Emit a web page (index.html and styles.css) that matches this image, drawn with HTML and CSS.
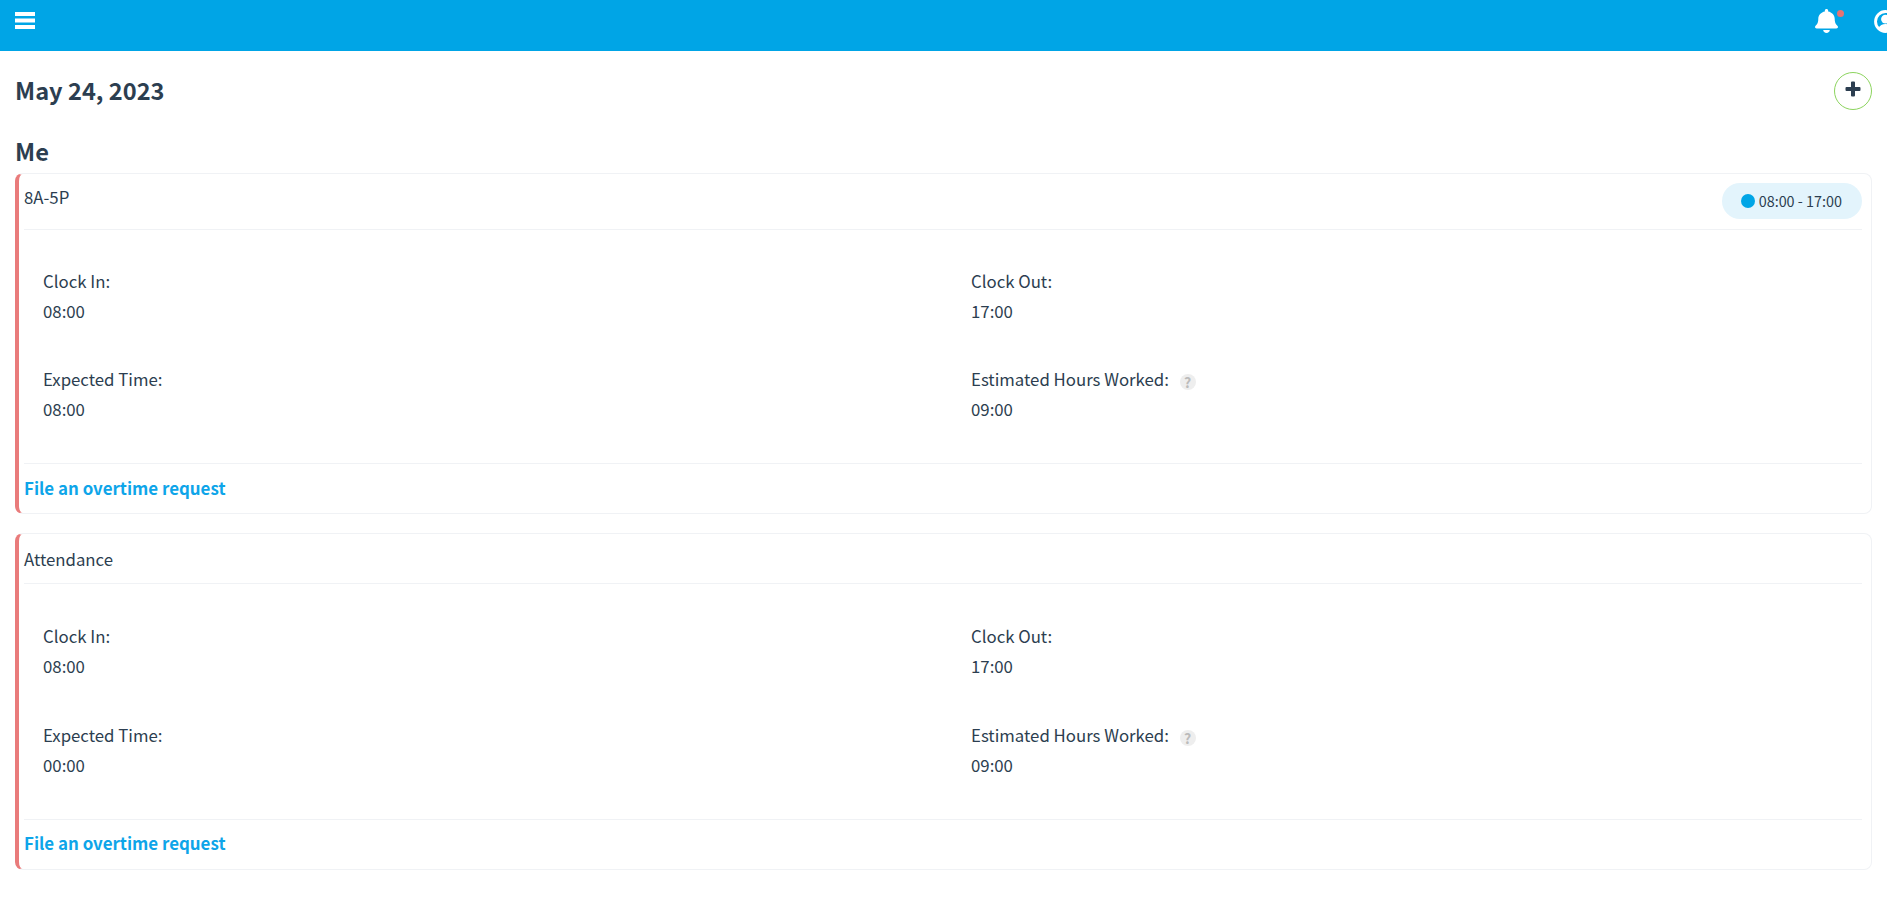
FILE: index.html
```html
<!DOCTYPE html>
<html lang="en">
<head>
    <meta charset="UTF-8">
    <meta name="viewport" content="width=device-width, initial-scale=1.0">
    <title>Attendance</title>
    <link rel="stylesheet" href="styles.css">
</head>
<body>
    <header class="topbar">
        <svg class="menu-icon" viewBox="0 0 20 17" aria-hidden="true">
            <rect width="20" height="4" y="0"></rect>
            <rect width="20" height="4" y="6.5"></rect>
            <rect width="20" height="4" y="13"></rect>
        </svg>
        <div class="topbar-right">
            <div class="bell">
                <svg class="bell-icon" viewBox="0 0 448 512" preserveAspectRatio="none" aria-hidden="true">
                    <path d="M224 512c35.32 0 63.97-28.65 63.97-64H160.03c0 35.35 28.65 64 63.97 64zm215.39-149.71c-19.32-20.76-55.47-51.99-55.47-154.29 0-77.7-54.48-139.9-127.94-155.16V32c0-17.67-14.32-32-31.98-32s-31.98 14.33-31.98 32v20.84C118.56 68.1 64.08 130.3 64.08 208c0 102.3-36.15 133.53-55.47 154.29-6 6.45-8.66 14.16-8.61 21.71.11 16.4 12.98 32 32.1 32h383.8c19.12 0 32-15.6 32.1-32 .05-7.55-2.61-15.27-8.61-21.71z"></path>
                </svg>
                <span class="bell-dot"></span>
            </div>
            <div class="user">
                <svg class="user-icon" viewBox="0 0 24 24" aria-hidden="true">
                    <circle class="user-ring" cx="12" cy="12" r="10.4"></circle>
                    <circle cx="12" cy="9.5" r="4.6"></circle>
                    <path d="M4.500 19.500c1.500-3.500 4.200-4.800 7.500-4.800s6 1.300 7.500 4.800l-2.500 2H7z"></path>
                </svg>
            </div>
        </div>
    </header>

    <main class="content">
        <div class="date-row">
            <h1>May 24, 2023</h1>
            <button class="add-btn" aria-label="Add">
                <svg viewBox="0 0 16 16" aria-hidden="true">
                    <path d="M6 1.5a1 1 0 0 1 1-1h2a1 1 0 0 1 1 1V6h4.500a1 1 0 0 1 1 1v2a1 1 0 0 1-1 1H10v4.500a1 1 0 0 1-1 1H7a1 1 0 0 1-1-1V10H1.500a1 1 0 0 1-1-1V7a1 1 0 0 1 1-1H6z"></path>
                </svg>
            </button>
        </div>
        <h2>Me</h2>

        <section class="card">
            <div class="card-head">
                <span>8A-5P</span>
                <span class="pill"><i class="pill-dot"></i>08:00 - 17:00</span>
            </div>
            <div class="fields">
                <div class="field">
                    <div>Clock In:</div>
                    <div>08:00</div>
                </div>
                <div class="field">
                    <div>Clock Out:</div>
                    <div>17:00</div>
                </div>
                <div class="field">
                    <div>Expected Time:</div>
                    <div>08:00</div>
                </div>
                <div class="field">
                    <div>Estimated Hours Worked: <span class="hint">?</span></div>
                    <div>09:00</div>
                </div>
            </div>
            <div class="card-foot"><a href="#">File an overtime request</a></div>
        </section>

        <section class="card card-short">
            <div class="card-head">
                <span>Attendance</span>
            </div>
            <div class="fields">
                <div class="field">
                    <div>Clock In:</div>
                    <div>08:00</div>
                </div>
                <div class="field">
                    <div>Clock Out:</div>
                    <div>17:00</div>
                </div>
                <div class="field">
                    <div>Expected Time:</div>
                    <div>00:00</div>
                </div>
                <div class="field">
                    <div>Estimated Hours Worked: <span class="hint">?</span></div>
                    <div>09:00</div>
                </div>
            </div>
            <div class="card-foot"><a href="#">File an overtime request</a></div>
        </section>
    </main>
</body>
</html>
```

FILE: styles.css
```css
html, body {
    height: 100%;
}
body {
    margin: 0;
    overflow: hidden;
    background-color: #fff;
    color: #2c3e50;
    font-family: "Noto Sans CJK SC", "Open Sans", sans-serif;
    font-size: 16.8px;
    line-height: 30px;
}
.topbar {
    display: flex;
    justify-content: space-between;
    height: 51px;
    padding: 12px 0 0 15px;
    box-sizing: border-box;
    background-color: #00a5e6;
}
.menu-icon {
    width: 20px;
    height: 17px;
    fill: #fff;
}
.topbar-right {
    display: flex;
    align-items: flex-start;
    margin-top: -3px;
}
.bell {
    position: relative;
    width: 23px;
    height: 24px;
    margin-right: 36px;
}
.bell-icon {
    display: block;
    width: 23px;
    height: 24px;
    fill: #fff;
}
.bell-dot {
    position: absolute;
    top: 1px;
    left: 22px;
    width: 7px;
    height: 7px;
    border-radius: 50%;
    background-color: #e57373;
}
.user {
    width: 13px;
    height: 24px;
    margin-top: 1px;
    overflow: hidden;
}
.user-icon {
    display: block;
    width: 23px;
    height: 23px;
    fill: #fff;
}
.user-ring {
    fill: none;
    stroke: #fff;
    stroke-width: 3;
}
.content {
    padding: 0 15px;
}
.date-row {
    display: flex;
    justify-content: space-between;
    align-items: flex-start;
    height: 84px;
    padding-top: 21px;
    box-sizing: border-box;
}
h1, h2 {
    margin: 0;
    font-size: 23.6px;
    font-weight: 700;
    line-height: 32px;
}
h1 {
    margin-top: 2px;
}
h2 {
    height: 38px;
}
.add-btn {
    display: flex;
    align-items: center;
    justify-content: center;
    width: 38px;
    height: 38px;
    padding: 0 0 5px;
    border: 1px solid #8cd45e;
    border-radius: 50%;
    background: none;
}
.add-btn svg {
    width: 16px;
    height: 16px;
    fill: #2c3e50;
}
.card {
    margin-bottom: 19px;
    padding: 0 9px 0 5px;
    border: 1px solid #f0f2f5;
    border-left: 4px solid #e97b7b;
    border-radius: 8px;
    background-color: #fff;
}
.card-head {
    display: flex;
    justify-content: space-between;
    min-height: 55px;
    border-bottom: 1px solid #f0f2f5;
}
.card-head > span:first-child {
    margin-top: 8px;
}
.card-short .card-head {
    min-height: 49px;
}
.card-short .card-head > span:first-child {
    margin-top: 10px;
}
.pill {
    display: flex;
    align-items: center;
    height: 36px;
    margin-top: 9px;
    padding: 0 20px 0 19px;
    border-radius: 18px;
    background-color: #e3f4fc;
    font-size: 14.4px;
}
.pill-dot {
    width: 14px;
    height: 14px;
    margin-right: 4px;
    border-radius: 50%;
    background-color: #00a5e6;
}
.fields {
    display: grid;
    grid-template-columns: 928px 1fr;
    row-gap: 38px;
    padding: 36px 19px 39px;
}
.card-short .fields {
    row-gap: 39px;
    padding-top: 37px;
}
.field {
    min-height: 60px;
}
.hint {
    display: inline-flex;
    align-items: center;
    justify-content: center;
    width: 16px;
    height: 16px;
    margin-left: 7px;
    border-radius: 50%;
    background-color: #eee;
    color: #bbb;
    font-size: 14px;
    font-weight: 700;
    line-height: 16px;
    vertical-align: -2px;
}
.card-foot {
    height: 49px;
    border-top: 1px solid #f0f2f5;
    line-height: 47px;
}
.card-short .card-foot {
    line-height: 45px;
}
.card-foot a {
    color: #0ea5e9;
    font-size: 16.9px;
    font-weight: 700;
    text-decoration: none;
}
```
